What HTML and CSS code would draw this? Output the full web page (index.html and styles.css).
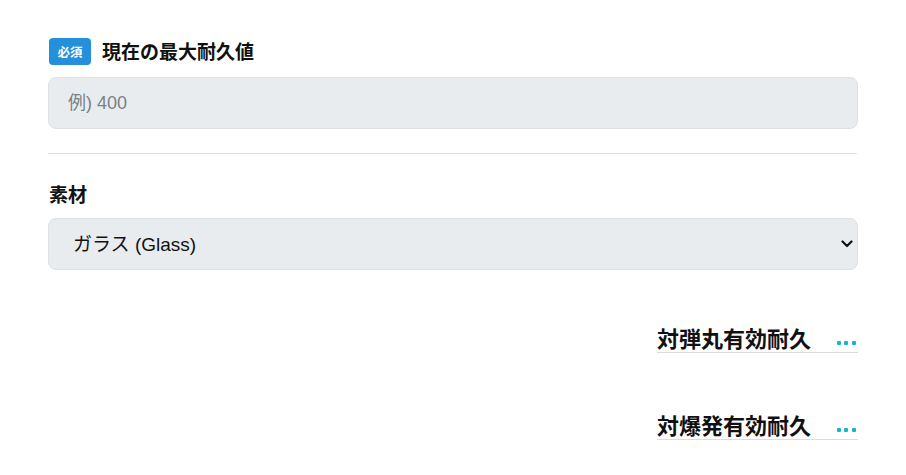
FILE: index.html
```html
<!DOCTYPE html>
<html lang="ja">
<head>
<meta charset="utf-8">
<link rel="stylesheet" href="styles.css">
</head>
<body>
<main class="form">
  <div class="label-row">
    <span class="badge">必須</span>
    <span class="label">現在の最大耐久値</span>
  </div>
  <input class="field" type="text" placeholder="例) 400">
  <hr class="divider">
  <div class="label plain">素材</div>
  <div class="select-wrap">
    <select class="field select">
      <option>ガラス (Glass)</option>
    </select>
    <svg class="chev" width="12" height="8" viewBox="0 0 12 8"><path d="M1.5 1.5 6 6l4.5-4.5" fill="none" stroke="#111" stroke-width="2.2" stroke-linecap="round" stroke-linejoin="round"/></svg>
  </div>
  <div class="result first">
    <span class="result-title">対弾丸有効耐久</span>
    <span class="dots"><i></i><i></i><i></i></span>
  </div>
  <div class="result second">
    <span class="result-title">対爆発有効耐久</span>
    <span class="dots"><i></i><i></i><i></i></span>
  </div>
</main>
</body>
</html>
```

FILE: styles.css
```css
* { box-sizing: border-box; }
html, body { margin: 0; padding: 0; background: #fff; }
body {
  font-family: "Liberation Sans", "Noto Sans CJK JP", sans-serif;
  color: #111;
}
.form {
  width: 810px;
  margin-left: 48px;
  padding-top: 37px;
}
.label-row {
  display: flex;
  align-items: center;
  gap: 11px;
  height: 28px;
  margin-bottom: 12px;
}
.badge {
  display: inline-flex;
  align-items: center;
  justify-content: center;
  width: 42px;
  height: 27px;
  margin-left: 1px;
  border-radius: 4px;
  background: #2490dc;
  color: #fff;
  font-size: 12.5px;
  font-weight: 700;
  font-family: "Noto Sans CJK JP", sans-serif;
}
.label {
  font-family: "Noto Sans CJK JP", sans-serif;
  font-size: 19px;
  font-weight: 700;
  line-height: 24px;
  color: #111;
}
.label.plain {
  margin-top: 28px;
  margin-bottom: 12px;
  margin-left: 1px;
}
.field {
  display: block;
  width: 100%;
  height: 52px;
  margin: 0;
  padding: 0 19px;
  border: 1px solid #dde0e4;
  border-radius: 8px;
  background: #e9ecef;
  font-family: "Liberation Sans", "Noto Sans CJK JP", sans-serif;
  font-size: 18px;
  color: #222;
  outline: none;
}
.field::placeholder { color: #7a7f85; }
.divider {
  margin: 24px 1px 0 0;
  border: 0;
  border-top: 1px solid #dcdcdc;
  height: 0;
}
.select-wrap { position: relative; }
.select {
  appearance: none;
  -webkit-appearance: none;
  padding-left: 24px;
  font-size: 19px;
  color: #111;
}
.chev {
  position: absolute;
  right: 5px;
  top: 22px;
  pointer-events: none;
}
.result {
  display: flex;
  justify-content: space-between;
  width: 201px;
  margin-left: auto;
  padding-right: 2px;
  border-bottom: 1px solid #dcdcdc;
  height: 31px;
}
.result.first { margin-top: 52px; }
.result.second { margin-top: 56px; }
.result-title {
  font-family: "Noto Sans CJK JP", sans-serif;
  font-size: 22px;
  font-weight: 700;
  line-height: 30px;
  color: #111;
}
.dots {
  display: flex;
  gap: 3.6px;
  align-self: flex-end;
  margin-bottom: 7px;
}
.dots i {
  display: block;
  width: 4px;
  height: 4px;
  border-radius: 1px;
  background: #14b5d0;
}
```
